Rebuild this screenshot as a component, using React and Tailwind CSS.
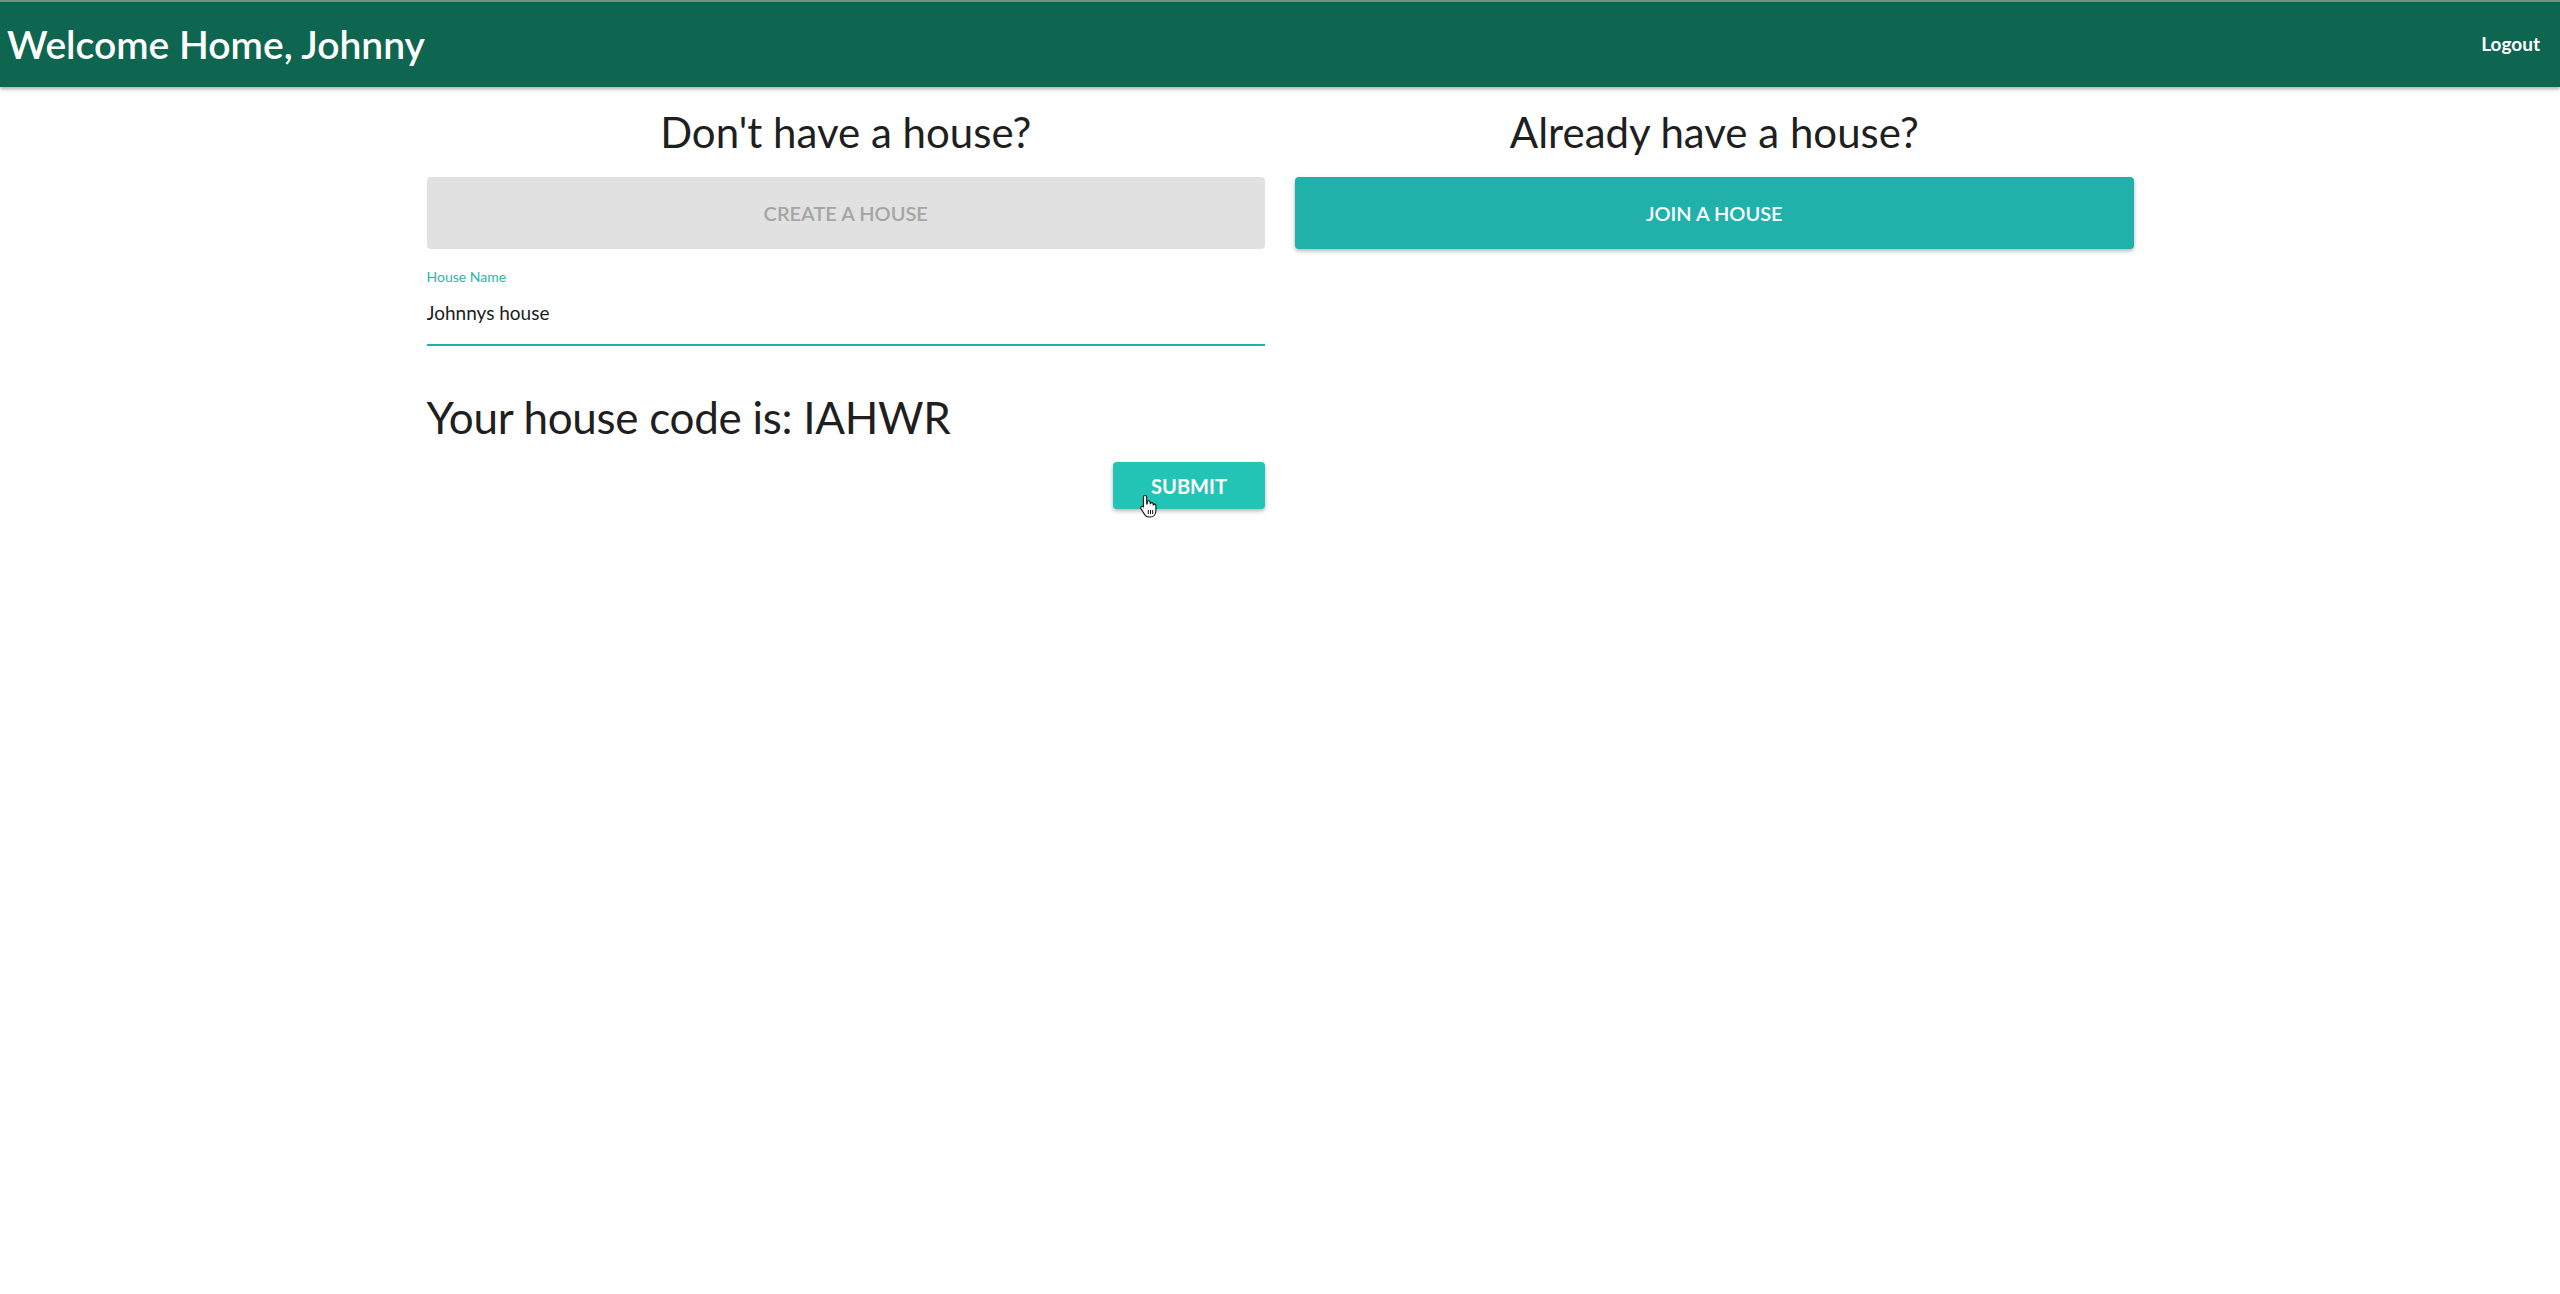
import { useState } from 'react'

// Gill Sans isn't available here, so Lato stands in for it.
const font = { fontFamily: 'Lato, "Open Sans", sans-serif' }

function HandCursor() {
    return (
        <svg
            className="absolute left-[26px] top-[32px] w-[20px] h-[24px] pointer-events-none"
            viewBox="0 0 20 24"
        >
            <path
                d="M6 1.5c1 0 1.7.7 1.7 1.7V10l.5-.1V8.2c0-.9.7-1.5 1.5-1.5s1.5.6 1.5 1.5v1.6c.2-.8.8-1.2 1.5-1.2.8 0 1.5.6 1.5 1.5v1c.2-.6.7-1 1.3-1 .8 0 1.4.6 1.4 1.4v5.2c0 3.6-2.2 6.3-5.6 6.3H9.7c-1.7 0-2.9-.8-3.9-2.1L2 14.8c-.5-.7-.4-1.6.3-2.1.6-.5 1.5-.4 2 .2l.1.1V3.2C4.4 2.2 5 1.5 6 1.5z"
                fill="#fff"
                stroke="#111"
                strokeWidth="1.1"
                strokeLinejoin="round"
            />
            <path d="M9.3 16v4M11.5 16v4M13.7 16v4" stroke="#111" strokeWidth="1" />
        </svg>
    )
}

export default function App() {
    const [houseName, setHouseName] = useState('Johnnys house')

    return (
        <div className="min-h-[1294px] bg-white text-[#222]" style={font}>
            <header className="h-[87px] bg-[#0e6550] border-t-2 border-[#7d8a86] flex items-center justify-between pl-[7px] pr-[20px] shadow-[0_2px_4px_rgba(0,0,0,0.35)]">
                <h1 className="text-[39px] font-semibold text-white">Welcome Home, Johnny</h1>
                <button className="text-[19px] font-bold text-white">Logout</button>
            </header>

            <main className="w-[1707px] mx-auto grid grid-cols-2 gap-[30px] pt-[20px]">
                <section>
                    <h2 className="text-[42px] leading-[50px] text-center text-[#1f1f1f]">Don't have a house?</h2>
                    <button
                        disabled
                        className="mt-[20px] w-full h-[72px] rounded-[4px] bg-[#e1e1e1] text-[#a5a5a5] text-[20px] font-semibold uppercase"
                    >
                        Create a House
                    </button>

                    <label className="block mt-[19px] text-[14px] leading-[17px] text-[#2bb5a8]">House Name</label>
                    <div className="mt-[16px] border-b-2 border-[#20b2aa] pb-[18px]">
                        <input
                            value={houseName}
                            onChange={(e) => setHouseName(e.target.value)}
                            className="w-full text-[19px] leading-[23px] text-[#1c1c1c] outline-none bg-transparent"
                            style={font}
                        />
                    </div>

                    <h3 className="mt-[45px] text-[44px] leading-[53px] text-[#1f1f1f] tracking-[-0.3px]">Your house code is: IAHWR</h3>
                    <div className="flex justify-end mt-[18px]">
                        <button className="relative w-[152px] h-[47px] rounded-[4px] bg-[#22c4b5] text-white text-[20px] font-bold uppercase shadow-[0_2px_4px_rgba(0,0,0,0.3)]">
                            Submit
                            <HandCursor />
                        </button>
                    </div>
                </section>

                <section>
                    <h2 className="text-[42px] leading-[50px] text-center text-[#1f1f1f]">Already have a house?</h2>
                    <button className="mt-[20px] w-full h-[72px] rounded-[4px] bg-[#20b2aa] text-white text-[20px] font-semibold uppercase shadow-[0_2px_4px_rgba(0,0,0,0.3)]">
                        Join a House
                    </button>
                </section>
            </main>
        </div>
    )
}
